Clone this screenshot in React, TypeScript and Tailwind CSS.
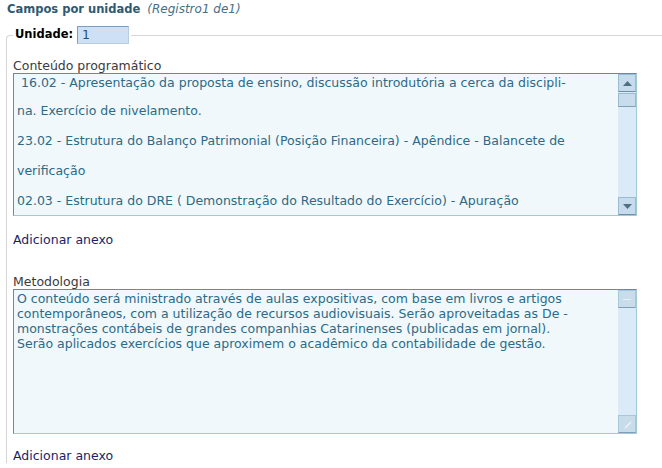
import React from "react";

// ─── Fake scrollbar (styled like the old IE textarea skin) ──────────────────

function ScrollBar({ disabled }: { disabled?: boolean }) {
  const btn = disabled
    ? "h-[18px] w-full border border-[#a9c6da] border-b-[#7f9fb4] bg-[#c9dcea] flex items-center justify-center"
    : "h-[18px] w-full border border-[#9dbbd0] border-b-[#6f8fa5] bg-[#c6dbec] flex items-center justify-center";
  return (
    <div className="w-[18px] h-full flex flex-col bg-[#dbeaf7]">
      <div className={btn}>
        {disabled ? (
          <div className="w-[8px] h-px bg-[#e8f1f8]" />
        ) : (
          <svg width="9" height="5" viewBox="0 0 9 5">
            <path d="M0 5 L4.5 0 L9 5 Z" fill="#4f6f82" />
          </svg>
        )}
      </div>
      {!disabled && (
        <div className="mt-px h-[14px] w-full border border-[#9dbbd0] border-b-[#7f9fb4] bg-[#c9dcec]" />
      )}
      <div className="flex-1" />
      <div className={btn}>
        {disabled ? (
          <svg width="9" height="9" viewBox="0 0 9 9">
            <path d="M2 8 L8 2" stroke="#eef5fa" strokeWidth="1.2" />
          </svg>
        ) : (
          <svg width="9" height="5" viewBox="0 0 9 5">
            <path d="M0 0 L4.5 5 L9 0 Z" fill="#4f6f82" />
          </svg>
        )}
      </div>
    </div>
  );
}

// ─── Text box ───────────────────────────────────────────────────────────────

function TextBox({
  height,
  disabled,
  children,
}: {
  height: string;
  disabled?: boolean;
  children: React.ReactNode;
}) {
  return (
    <div
      className={`${height} w-[624px] flex border border-t-[#5f8fa2] border-l-[#5f8fa2] border-r-[#a3c8da] border-b-[#a3c8da] bg-[#f0f8fc]`}
    >
      <div className="flex-1 pl-[3px] text-[12.5px] text-[#2c6a86] overflow-hidden whitespace-nowrap">
        {children}
      </div>
      <ScrollBar disabled={disabled} />
    </div>
  );
}

// ─── Page ───────────────────────────────────────────────────────────────────

export default function App() {
  return (
    <div
      className="w-[662px] h-[468px] overflow-hidden bg-white"
      style={{ fontFamily: '"DejaVu Sans", Verdana, sans-serif' }}
    >
      {/* Header */}
      <div className="pl-[7px] pt-[2px] h-[18px] leading-[14px] flex items-baseline">
        <span className="font-bold text-[11.5px] text-[#2d5a73]">Campos por unidade</span>
        <span className="ml-[7px] italic text-[12px] text-[#45708a]">(Registro1 de1)</span>
      </div>

      <fieldset className="mt-[8px] ml-[6px] border-t border-l border-[#d6d6d6] rounded-tl-[4px] pl-[6px]">
        <legend className="px-[2px] flex items-center gap-[4px]">
          <span className="text-[11.5px] font-bold text-black">Unidade:</span>
          <span className="w-[52px] h-[18px] border border-[#7c9dbb] border-r-[#b7cde2] border-b-[#b7cde2] bg-[#cde0f6] pl-[4px] text-[12.5px] leading-[16px] text-[#23506b]">
            1
          </span>
        </legend>

        {/* Conteúdo programático */}
        <div className="mt-[14px] leading-[15px] text-[12.5px] text-[#3a3a3a]">Conteúdo programático</div>
        <TextBox height="h-[143px]">
          <div className="leading-[17px] pl-[4px]">
            16.02 - Apresentação da proposta de ensino, discussão introdutória a cerca da discipli-
          </div>
          <div className="mt-[5px] leading-[30px]">
            <div>na. Exercício de nivelamento.</div>
            <div>23.02 - Estrutura do Balanço Patrimonial (Posição Financeira) - Apêndice - Balancete de</div>
            <div>verificação</div>
            <div>02.03 - Estrutura do DRE ( Demonstração do Resultado do Exercício) - Apuração</div>
          </div>
        </TextBox>
        <div className="mt-[17px] leading-[14px] text-[12.5px] text-[#1c1c70]">Adicionar anexo</div>

        {/* Metodologia */}
        <div className="mt-[27px] leading-[15px] text-[12.5px] text-[#3a3a3a]">Metodologia</div>
        <TextBox height="h-[145px]" disabled>
          <div className="pt-px leading-[15px]">
            O conteúdo será ministrado através de aulas expositivas, com base em livros e artigos
            <br />
            contemporâneos, com a utilização de recursos audiovisuais. Serão aproveitadas as De -
            <br />
            monstrações contábeis de grandes companhias Catarinenses (publicadas em jornal).
            <br />
            Serão aplicados exercícios que aproximem o acadêmico da contabilidade de gestão.
          </div>
        </TextBox>
        <div className="mt-[15px] leading-[14px] text-[12.5px] text-[#1c1c70]">Adicionar anexo</div>
      </fieldset>
    </div>
  );
}
